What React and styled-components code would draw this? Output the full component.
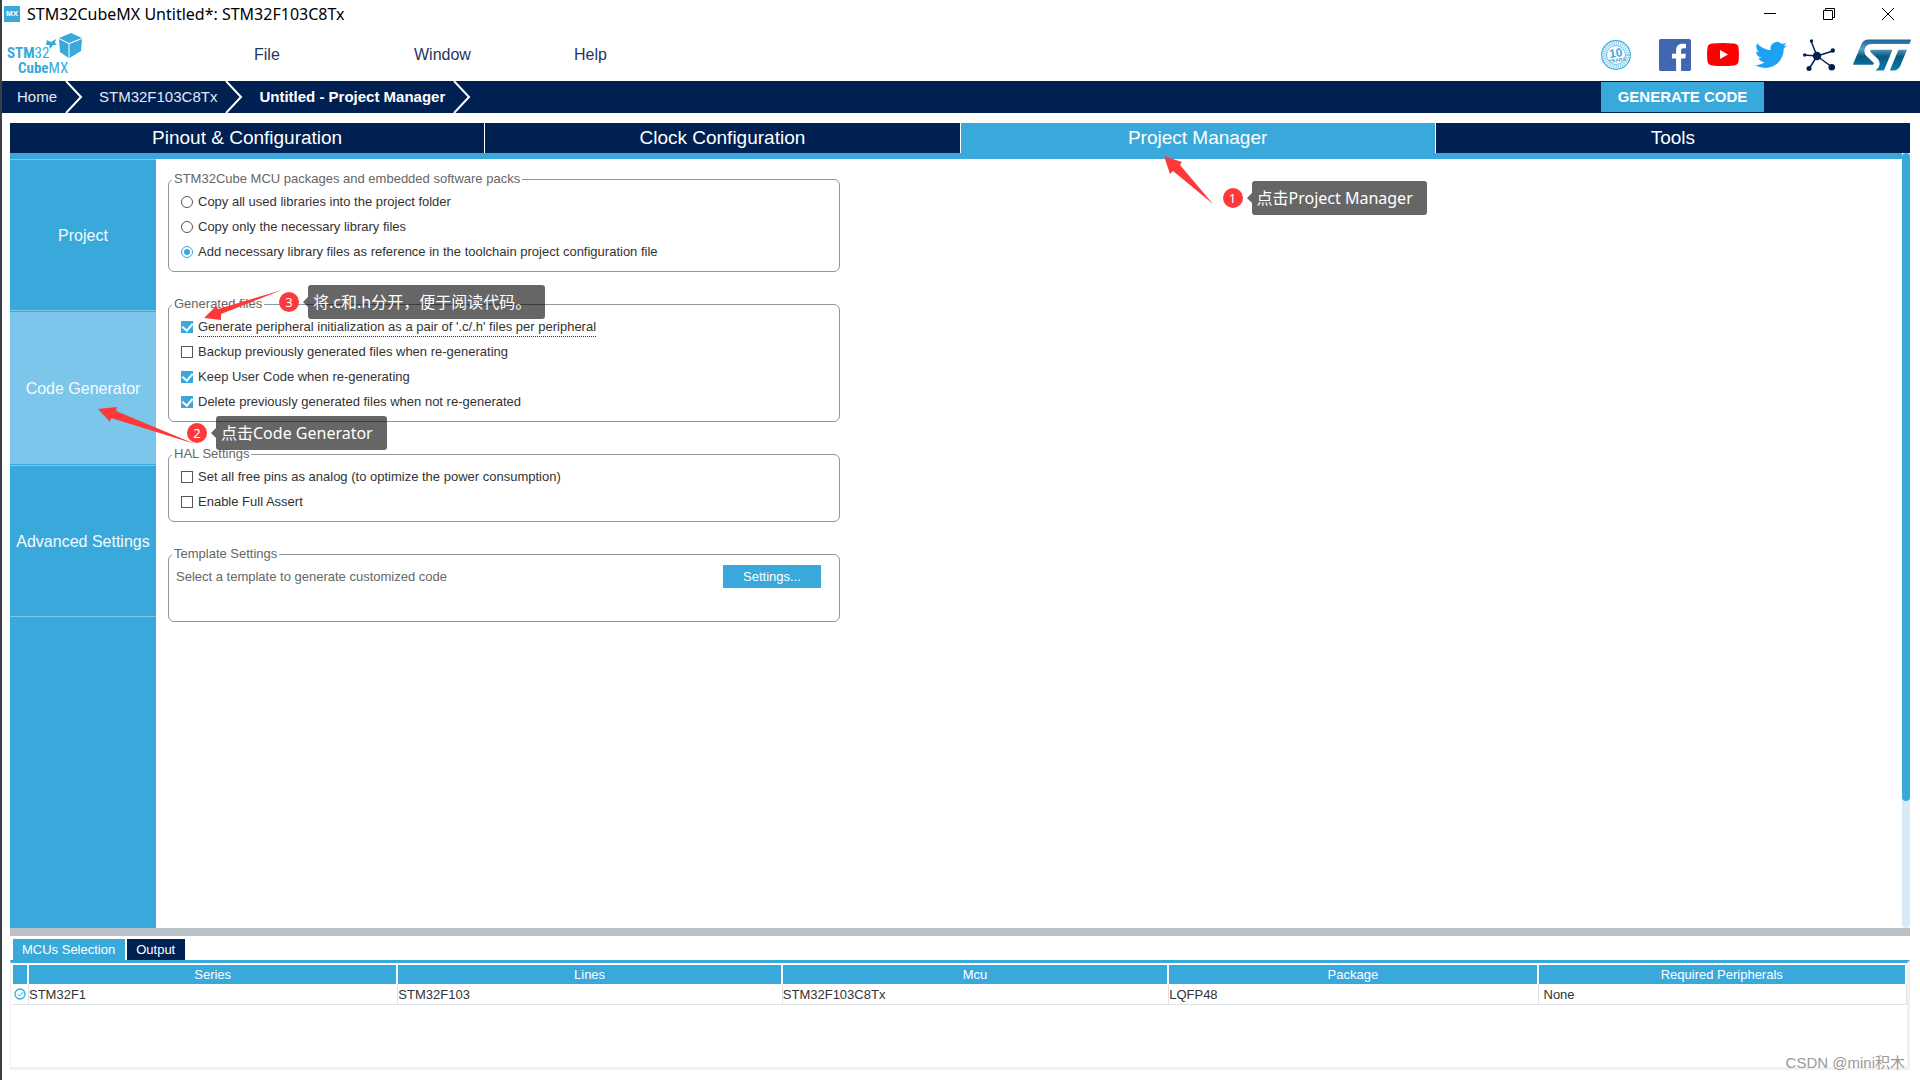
import React, { useState } from 'react';
import styled, { createGlobalStyle, css } from 'styled-components';
import { SiStmicroelectronics } from 'react-icons/si';


const BLUE = '#39a9dc';
const NAVY = '#002052';
const LIGHT = '#7bc6ea';

const GlobalStyle = createGlobalStyle`
    * {
        box-sizing: border-box;
    }
    body {
        margin: 0;
        background: #fff;
        font-family: "Liberation Sans", Arial, sans-serif;
        font-size: 13px;
        color: #333;
    }
    button, input {
        font-family: inherit;
        margin: 0;
    }
`;

const plainButton = css`
    border: 0;
    padding: 0;
    background: transparent;
    cursor: pointer;
`;

const Window = styled.div`
    display: flex;
    flex-direction: column;
    min-height: 100vh;
    border-left: 2px solid #3c3f43;
    position: relative;
`;

/* ---------- title bar ---------- */

const TitleBar = styled.header`
    display: flex;
    align-items: center;
    height: 28px;
    padding: 0 23px 0 2px;
    font-family: "Noto Sans", "Open Sans", sans-serif;
    font-size: 16px;
    line-height: 20px;
    color: #000;
`;
const AppIcon = styled.span`
    width: 16px;
    height: 16px;
    margin-right: 7px;
    background: ${BLUE};
    color: #fff;
    font: bold 8px/16px "Liberation Sans", sans-serif;
    text-align: center;
`;
const WindowControls = styled.div`
    display: flex;
    gap: 41px;
    margin-left: auto;
`;
const ControlButton = styled.button`
    ${plainButton}
    display: flex;
    width: 18px;
    justify-content: center;

    svg {
        fill: none;
        stroke: #000;
    }
`;

/* ---------- menu ---------- */

const MenuBar = styled.div`
    display: flex;
    align-items: center;
    height: 53px;
    padding: 0 9px 0 4px;
`;
const Logo = styled.svg`
    width: 246px;
    height: 46px;
`;
const Menu = styled.nav`
    display: flex;
`;
const MenuButton = styled.button`
    ${plainButton}
    width: 160px;
    padding: 0 2px;
    font-size: 16px;
    line-height: 24px;
    text-align: left;
    color: #1f3563;
`;
const Socials = styled.div`
    display: flex;
    align-items: center;
    gap: 16px;
    margin-left: auto;
`;
const SocialLink = styled.a`
    display: flex;
    justify-content: center;
    width: ${props => (props.$wide ? '58px' : '32px')};
    margin-left: ${props => (props.$wide ? '2px' : '0')};
    margin-right: ${props => (props.$spaced ? '11px' : '0')};
`;

/* ---------- breadcrumb ---------- */

const Crumbs = styled.nav`
    display: flex;
    align-items: center;
    height: 32px;
    padding-right: 156px;
    background: ${NAVY};
`;
const Crumb = styled.a`
    padding: 0 8px 0 15px;
    font-size: 15px;
    line-height: 20px;
    font-weight: ${props => (props.$active ? 'bold' : 'normal')};
    color: ${props => (props.$active ? '#fff' : '#e3e9f2')};
    text-decoration: none;
`;
const Chevron = styled.svg`
    width: 19px;
    height: 32px;
    fill: none;
    stroke: #fff;
    stroke-width: 2;
`;
const GenerateButton = styled.button`
    ${plainButton}
    margin-left: auto;
    width: 163px;
    height: 30px;
    background: ${BLUE};
    color: #fff;
    font-size: 15px;
    line-height: 28px;
    font-weight: bold;
`;

/* ---------- main tabs ---------- */

const Tabs = styled.div`
    display: grid;
    grid-template-columns: repeat(4, 1fr);
    gap: 1px;
    margin: 10px 10px 0 8px;
`;
const TabCell = styled.div`
    position: relative;
    display: flex;
`;
const TabButton = styled.button`
    ${plainButton}
    flex: 1;
    height: 30px;
    background: ${props => (props.$active ? BLUE : NAVY)};
    color: #fff;
    font-size: 19px;
    line-height: 30px;
`;

/* ---------- workspace ---------- */

const Workspace = styled.main`
    display: flex;
    flex: 1;
    margin: 0 10px 0 8px;
`;
const Body = styled.div`
    display: flex;
    flex: 1;
    border-top: 6px solid ${BLUE};
`;
const Sidebar = styled.aside`
    display: flex;
    flex-direction: column;
    gap: 1px;
    width: 146px;
    background: ${BLUE};
`;
const SideCell = styled.div`
    position: relative;
    display: flex;
`;
const SideButton = styled.button`
    ${plainButton}
    flex: 1;
    height: 152px;
    padding-top: 2px;
    border-top: 1px solid ${LIGHT};
    border-bottom: 1px solid ${LIGHT};
    background: ${props => (props.$active ? LIGHT : BLUE)};
    color: #f4fbff;
    font-size: 16px;
    white-space: nowrap;
`;
const Content = styled.section`
    display: flex;
    flex-direction: column;
    gap: 24px;
    flex: 1;
    max-width: 684px;
    padding: 12px 0 0 12px;
`;
const ScrollTrack = styled.div`
    width: 8px;
    border-radius: 4px;
    background: #d9e9f5;
`;
const ScrollThumb = styled.div`
    height: 648px;
    border-radius: 4px;
    background: ${BLUE};
`;

const Group = styled.fieldset`
    margin: 0;
    min-width: 0;
    padding: 2px 3px 7px;
    border: 1px solid #8f969c;
    border-radius: 6px;
`;
const Legend = styled.legend`
    padding: 0 2px;
    font-size: 13px;
    line-height: 16px;
    color: #666;
`;
const Options = styled.div`
    position: relative;
    padding-left: 9px;
`;
const Option = styled.label`
    display: flex;
    align-items: center;
    gap: 5px;
    height: 25px;
    color: #333;
`;
const OptionText = styled.span`
    line-height: 19px;
    border-bottom: 1px dotted ${props => (props.$focused ? '#333' : 'transparent')};
`;
const Check = styled.input.attrs({ type: 'checkbox' })`
    appearance: none;
    display: flex;
    align-items: center;
    justify-content: center;
    width: 12px;
    height: 12px;
    border: 1px solid #555;
    background: #fff;

    &:checked {
        border-color: ${BLUE};
        background: ${BLUE};
    }
    &:checked::after {
        content: "";
        width: 5px;
        height: 8px;
        margin-bottom: 2px;
        border: solid #fff;
        border-width: 0 2px 2px 0;
        transform: rotate(40deg);
    }
`;
const Radio = styled.input.attrs({ type: 'radio' })`
    appearance: none;
    width: 12px;
    height: 12px;
    padding: 2px;
    border: 1px solid #555;
    border-radius: 50%;
    background-clip: content-box;

    &:checked {
        border-color: ${BLUE};
        background-color: ${BLUE};
    }
`;
const TemplateRow = styled.div`
    display: flex;
    align-items: center;
    justify-content: space-between;
    height: 50px;
    padding: 0 15px 25px 4px;
    color: #666;
`;
const SettingsButton = styled.button`
    ${plainButton}
    width: 98px;
    height: 23px;
    background: ${BLUE};
    color: #fff;
    font-size: 13px;
`;

/* ---------- callouts ---------- */

const CalloutBox = styled.div`
    position: absolute;
    z-index: 2;
    left: ${props => props.$left}px;
    top: ${props => props.$top}px;
    display: flex;
    align-items: center;
    gap: 9px;
    height: 34px;
    font-family: "Noto Sans", "Noto Sans CJK SC", sans-serif;
    color: #fff;
    white-space: nowrap;
`;
const Arrow = styled.svg`
    position: absolute;
    left: 0;
    top: 0;
    width: 1px;
    height: 1px;
    overflow: visible;
    fill: #fd3a39;
`;
const Badge = styled.span`
    position: relative;
    width: 20px;
    height: 20px;
    border-radius: 50%;
    background: #fd3a39;
    font-size: 13px;
    line-height: 20px;
    text-align: center;
`;
const Bubble = styled.span`
    position: relative;
    padding: 0 14px 0 5px;
    border-radius: 3px;
    background: rgba(0, 0, 0, 0.6);
    font-size: 16px;
    line-height: 34px;

    &::before {
        content: "";
        position: absolute;
        left: -5px;
        top: 12px;
        border: solid transparent;
        border-width: 5px 5px 5px 0;
        border-right-color: rgba(0, 0, 0, 0.6);
    }
`;

/* ---------- bottom panel ---------- */

const Splitter = styled.div`
    height: 8px;
    margin: 0 10px 0 8px;
    background: #b8c2c8;
`;
const BottomPanel = styled.section`
    display: flex;
    flex-direction: column;
    height: 144px;
    padding: 3px 10px 10px 8px;
`;
const PanelTabs = styled.div`
    display: flex;
    gap: 2px;
    padding-left: 3px;
`;
const PanelTab = styled.button`
    ${plainButton}
    height: 21px;
    padding: 0 10px 0 9px;
    background: ${props => (props.$active ? BLUE : NAVY)};
    color: #fff;
    font-size: 13px;
`;
const TablePane = styled.div`
    flex: 1;
    padding: 2px 0 0 2px;
    border: solid #f0f0f0;
    border-width: 0 3px 3px 1px;
    border-top: 3px solid ${BLUE};
`;
const Table = styled.table`
    width: 100%;
    table-layout: fixed;
    border-spacing: 0;
    font-size: 13px;
    line-height: 19px;

    th {
        height: 19px;
        padding: 0;
        border-right: 2px solid #fff;
        background: ${BLUE};
        color: #fff;
        font-weight: normal;
    }
    td {
        height: 21px;
        padding: 0;
        border: solid #dfe3e8;
        border-width: 0 1px 1px 0;
    }
    td:last-child {
        padding-left: 5px;
    }
    svg {
        display: block;
        margin: 0 1px;
    }
`;
const Watermark = styled.span`
    position: absolute;
    right: 15px;
    bottom: 5px;
    font-family: "Liberation Sans", "Noto Sans CJK SC", sans-serif;
    font-size: 15px;
    line-height: 24px;
    color: #999;
`;


function CubeLogo() {
    return (
        <Logo viewBox="0 0 246 46" role="img" aria-label="STM32CubeMX">
            <g fill={BLUE} fontFamily="'Liberation Sans Narrow', 'Arial Narrow', 'Roboto Condensed', 'Liberation Sans'" fontSize="15">
                <text x="1" y="26"><tspan fontWeight="bold">STM</tspan>32</text>
                <text x="12" y="41"><tspan fontWeight="bold">Cube</tspan>MX</text>
                <path d="M41 8L45 10L50 7L49 11L51 13L47 13L44 17L43 13L40 13Z" />
                <path d="M65 1L76 6L63 11L53 6Z" />
                <path d="M53 7L62.500 12V26L54 20Z" />
                <path d="M76 7L63.500 12V26L75 19Z" />
            </g>
        </Logo>
    );
}

function AnniversaryIcon() {
    return (
        <svg width="30" height="30" viewBox="0 0 30 30" fill="none" stroke={BLUE}>
            <circle cx="15" cy="15" r="14.300" strokeWidth="1.200" />
            <circle cx="15" cy="15" r="11.800" strokeWidth="3" strokeDasharray="1.200 1" strokeOpacity=".6" />
            <circle cx="15" cy="15" r="9.500" strokeWidth=".8" />
            <g fill={BLUE} stroke="none" fontFamily="Liberation Sans" fontWeight="bold" textAnchor="middle" transform="rotate(-8 15 15)">
                <text x="15" y="17" fontSize="12">10</text>
                <text x="15.500" y="22" fontSize="5">YEARS</text>
            </g>
        </svg>
    );
}

function FacebookIcon() {
    return (
        <svg width="32" height="32" viewBox="0 0 24 24" fill="#4267b2">
            <path d="M22.676 0H1.324C.593 0 0 .593 0 1.324v21.352C0 23.408.593 24 1.324 24h11.494v-9.294H9.689v-3.621h3.129V8.41c0-3.099 1.894-4.785 4.659-4.785 1.325 0 2.464.097 2.796.141v3.24h-1.921c-1.500 0-1.792.721-1.792 1.771v2.311h3.584l-.465 3.630H16.560V24h6.115c.733 0 1.325-.592 1.325-1.324V1.324C24 .593 23.408 0 22.676 0" />
        </svg>
    );
}

function YoutubeIcon() {
    return (
        <svg width="32" height="23" viewBox="0 0 32 23">
            <path d="M5 .6Q16-.5 27 .6Q31 1 31.500 4.500Q32.400 11.500 31.500 18.500Q31 22 27 22.400Q16 23.500 5 22.400Q1 22 .5 18.500Q-.4 11.500 .5 4.500Q1 1 5 .6Z" fill="#f00" />
            <path d="M13 7L21 11.500L13 16Z" fill="#fff" />
        </svg>
    );
}

function TwitterIcon() {
    return (
        <svg width="32" height="32" viewBox="0 0 24 24" fill="#1da1f2">
            <path d="M23.953 4.570a10 10 0 01-2.825.775 4.958 4.958 0 002.163-2.723c-.951.555-2.005.959-3.127 1.184a4.920 4.920 0 00-8.384 4.482C7.690 8.095 4.067 6.130 1.640 3.162a4.822 4.822 0 00-.666 2.475c0 1.710.870 3.213 2.188 4.096a4.904 4.904 0 01-2.228-.616v.060a4.923 4.923 0 003.946 4.827 4.996 4.996 0 01-2.212.085 4.936 4.936 0 004.604 3.417 9.867 9.867 0 01-6.102 2.105c-.390 0-.779-.023-1.170-.067a13.995 13.995 0 007.557 2.209c9.053 0 13.998-7.496 13.998-13.985 0-.210 0-.420-.015-.630A9.935 9.935 0 0024 4.590z" />
        </svg>
    );
}

function CommunityIcon() {
    return (
        <svg width="32" height="32" viewBox="0 0 32 32" fill={NAVY} stroke={NAVY} strokeWidth="1.500">
            <path d="M14 17L8 2M14 17L1 16M14 17L30 12M14 17L29 28M14 17L6 30" />
            <g stroke="none">
                <circle cx="14" cy="17" r="4.200" />
                <circle cx="8.500" cy="2" r="1.700" />
                <circle cx="1.700" cy="16" r="1.700" />
                <circle cx="29.800" cy="11.500" r="2.200" />
                <circle cx="28.800" cy="28.300" r="3.300" />
                <circle cx="6" cy="29.500" r="2.500" />
            </g>
        </svg>
    );
}

const StLogo = styled(SiStmicroelectronics)`
    width: 58px;
    height: 32px;
`;

function StIcon() {
    return (
        <>
            <svg width="0" height="0">
                <linearGradient id="st" x1="0" y1="0" x2="0" y2="1">
                    <stop offset="0" stopColor="#1b6394" />
                    <stop offset=".3" stopColor="#5a9fc4" />
                    <stop offset=".55" stopColor="#07597f" />
                    <stop offset="1" stopColor="#067fae" />
                </linearGradient>
            </svg>
            <StLogo preserveAspectRatio="xMidYMid slice" fill="url(#st)" />
        </>
    );
}

function Callout({ number, left, top, arrow, children }) {
    return (
        <CalloutBox $left={left} $top={top}>
            <Arrow><polygon points={arrow} /></Arrow>
            <Badge>{number}</Badge>
            <Bubble>{children}</Bubble>
        </CalloutBox>
    );
}

const tabs = ['Pinout & Configuration', 'Clock Configuration', 'Project Manager', 'Tools'];
const pages = ['Project', 'Code Generator', 'Advanced Settings'];
const packs = [
    'Copy all used libraries into the project folder',
    'Copy only the necessary library files',
    'Add necessary library files as reference in the toolchain project configuration file',
];

function App() {
    const [tab, setTab] = useState('Project Manager');
    const [page, setPage] = useState('Code Generator');
    const [panel, setPanel] = useState('MCUs Selection');
    const [pack, setPack] = useState(packs[2]);
    const [generated, setGenerated] = useState({
        "Generate peripheral initialization as a pair of '.c/.h' files per peripheral": true,
        'Backup previously generated files when re-generating': false,
        'Keep User Code when re-generating': true,
        'Delete previously generated files when not re-generated': true,
    });
    const [hal, setHal] = useState({
        'Set all free pins as analog (to optimize the power consumption)': false,
        'Enable Full Assert': false,
    });

    return (
        <>
            <GlobalStyle />
            <Window>
                <TitleBar>
                    <AppIcon>MX</AppIcon>
                    STM32CubeMX Untitled*: STM32F103C8Tx
                    <WindowControls>
                        <ControlButton aria-label="Minimize">
                            <svg width="12" height="12"><path d="M0 5.500H12" /></svg>
                        </ControlButton>
                        <ControlButton aria-label="Restore">
                            <svg width="12" height="12"><path d="M.5 2.500H9.500V11.500H.5ZM2.500 2.500V.5H11.500V9.500H9.500" /></svg>
                        </ControlButton>
                        <ControlButton aria-label="Close">
                            <svg width="12" height="12"><path d="M0 0L12 12M12 0L0 12" /></svg>
                        </ControlButton>
                    </WindowControls>
                </TitleBar>

                <MenuBar>
                    <CubeLogo />
                    <Menu>
                        <MenuButton>File</MenuButton>
                        <MenuButton>Window</MenuButton>
                        <MenuButton>Help</MenuButton>
                    </Menu>
                    <Socials>
                        <SocialLink href="#" aria-label="10 years" $spaced><AnniversaryIcon /></SocialLink>
                        <SocialLink href="#" aria-label="Facebook"><FacebookIcon /></SocialLink>
                        <SocialLink href="#" aria-label="YouTube"><YoutubeIcon /></SocialLink>
                        <SocialLink href="#" aria-label="Twitter"><TwitterIcon /></SocialLink>
                        <SocialLink href="#" aria-label="Community"><CommunityIcon /></SocialLink>
                        <SocialLink href="#" aria-label="ST" $wide><StIcon /></SocialLink>
                    </Socials>
                </MenuBar>

                <Crumbs>
                    <Crumb href="#">Home</Crumb>
                    <Chevron><path d="M1 0L16 16L1 32" /></Chevron>
                    <Crumb href="#">STM32F103C8Tx</Crumb>
                    <Chevron><path d="M1 0L16 16L1 32" /></Chevron>
                    <Crumb href="#" $active>Untitled - Project Manager</Crumb>
                    <Chevron><path d="M1 0L16 16L1 32" /></Chevron>
                    <GenerateButton>GENERATE CODE</GenerateButton>
                </Crumbs>

                <Tabs>
                    {tabs.map(name => (
                        <TabCell key={name}>
                            <TabButton $active={tab === name} onClick={() => setTab(name)}>{name}</TabButton>
                            {name === 'Project Manager' && (
                                <Callout number={1} left={262} top={58} arrow="-59,-25 -41,-19 -43,-16 -10,23 -50,-10 -53,-7">
                                    点击Project Manager
                                </Callout>
                            )}
                        </TabCell>
                    ))}
                </Tabs>

                <Workspace>
                    <Body>
                        <Sidebar>
                            {pages.map(name => (
                                <SideCell key={name}>
                                    <SideButton $active={page === name} onClick={() => setPage(name)}>{name}</SideButton>
                                    {name === 'Code Generator' && (
                                        <Callout number={2} left={177} top={104} arrow="-89,-7 -70,-9 -71,-5 8,28 -76,2 -77,6">
                                            点击Code Generator
                                        </Callout>
                                    )}
                                </SideCell>
                            ))}
                        </Sidebar>
                        <Content>
                            <Group>
                                <Legend>STM32Cube MCU packages and embedded software packs</Legend>
                                <Options>
                                    {packs.map(name => (
                                        <Option key={name}>
                                            <Radio name="packs" checked={pack === name} onChange={() => setPack(name)} />
                                            <OptionText>{name}</OptionText>
                                        </Option>
                                    ))}
                                </Options>
                            </Group>
                            <Group>
                                <Legend>Generated files</Legend>
                                <Options>
                                    {Object.keys(generated).map((name, i) => (
                                        <Option key={name}>
                                            <Check checked={generated[name]} onChange={e => setGenerated({ ...generated, [name]: e.target.checked })} />
                                            <OptionText $focused={i === 0}>{name}</OptionText>
                                        </Option>
                                    ))}
                                    <Callout number={3} left={107} top={-29} arrow="-75,33 -63,21 -61,24 3,5 -58,29 -58,35">
                                        将.c和.h分开，便于阅读代码。
                                    </Callout>
                                </Options>
                            </Group>
                            <Group>
                                <Legend>HAL Settings</Legend>
                                <Options>
                                    {Object.keys(hal).map(name => (
                                        <Option key={name}>
                                            <Check checked={hal[name]} onChange={e => setHal({ ...hal, [name]: e.target.checked })} />
                                            <OptionText>{name}</OptionText>
                                        </Option>
                                    ))}
                                </Options>
                            </Group>
                            <Group>
                                <Legend>Template Settings</Legend>
                                <TemplateRow>
                                    Select a template to generate customized code
                                    <SettingsButton>Settings...</SettingsButton>
                                </TemplateRow>
                            </Group>
                        </Content>
                    </Body>
                    <ScrollTrack><ScrollThumb /></ScrollTrack>
                </Workspace>

                <Splitter />
                <BottomPanel>
                    <PanelTabs>
                        {['MCUs Selection', 'Output'].map(name => (
                            <PanelTab key={name} $active={panel === name} onClick={() => setPanel(name)}>{name}</PanelTab>
                        ))}
                    </PanelTabs>
                    <TablePane>
                        <Table>
                            <colgroup>
                                <col width="16" />
                                <col width="19.500%" />
                                <col width="20.300%" />
                                <col width="20.400%" />
                                <col width="19.500%" />
                                <col />
                            </colgroup>
                            <thead>
                                <tr>
                                    <th aria-label="Status" />
                                    <th>Series</th>
                                    <th>Lines</th>
                                    <th>Mcu</th>
                                    <th>Package</th>
                                    <th>Required Peripherals</th>
                                </tr>
                            </thead>
                            <tbody>
                                <tr>
                                    <td>
                                        <svg width="12" height="12" viewBox="0 0 12 12" fill="none" stroke={BLUE}>
                                            <circle cx="6" cy="6" r="5" strokeWidth="1.300" />
                                            <path d="M3.500 6L5.500 8L9 4" />
                                        </svg>
                                    </td>
                                    <td>STM32F1</td>
                                    <td>STM32F103</td>
                                    <td>STM32F103C8Tx</td>
                                    <td>LQFP48</td>
                                    <td>None</td>
                                </tr>
                            </tbody>
                        </Table>
                    </TablePane>
                </BottomPanel>
                <Watermark>CSDN @mini积木</Watermark>
            </Window>
        </>
    );
}

export default App;
